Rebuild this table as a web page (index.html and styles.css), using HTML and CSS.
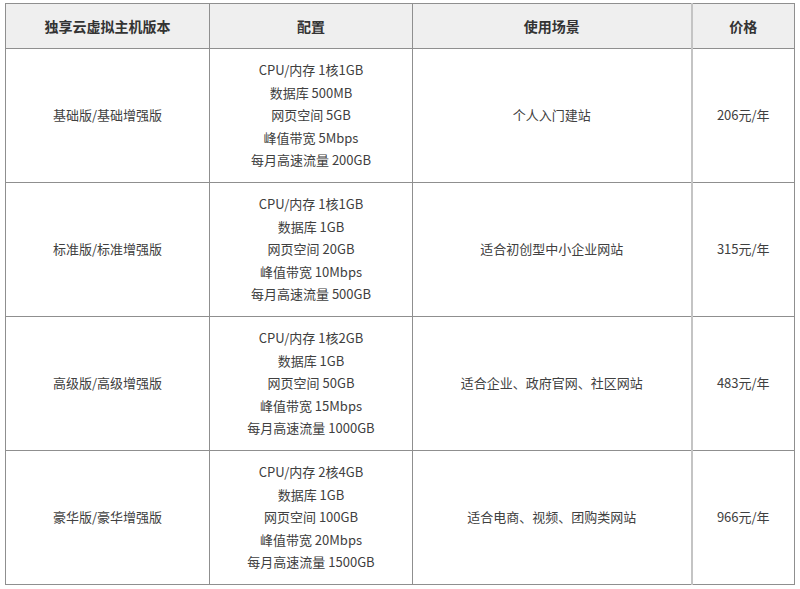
FILE: index.html
```html
<!DOCTYPE html>
<html lang="zh-CN">
<head>
<meta charset="utf-8">
<title>独享云虚拟主机版本</title>
<link rel="stylesheet" href="styles.css">
</head>
<body>
<table class="plans">
  <colgroup>
    <col class="c-name">
    <col class="c-spec">
    <col class="c-use">
    <col class="c-price">
  </colgroup>
  <thead>
    <tr class="head">
      <th>独享云虚拟主机版本</th>
      <th>配置</th>
      <th>使用场景</th>
      <th class="price">价格</th>
    </tr>
  </thead>
  <tbody>
    <tr class="row">
      <td>基础版/基础增强版</td>
      <td class="spec">CPU/内存 1核1GB<br>数据库 500MB<br>网页空间 5GB<br>峰值带宽 5Mbps<br>每月高速流量 200GB</td>
      <td>个人入门建站</td>
      <td class="price">206元/年</td>
    </tr>
    <tr class="row">
      <td>标准版/标准增强版</td>
      <td class="spec">CPU/内存 1核1GB<br>数据库 1GB<br>网页空间 20GB<br>峰值带宽 10Mbps<br>每月高速流量 500GB</td>
      <td>适合初创型中小企业网站</td>
      <td class="price">315元/年</td>
    </tr>
    <tr class="row">
      <td>高级版/高级增强版</td>
      <td class="spec">CPU/内存 1核2GB<br>数据库 1GB<br>网页空间 50GB<br>峰值带宽 15Mbps<br>每月高速流量 1000GB</td>
      <td>适合企业、政府官网、社区网站</td>
      <td class="price">483元/年</td>
    </tr>
    <tr class="row">
      <td>豪华版/豪华增强版</td>
      <td class="spec">CPU/内存 2核4GB<br>数据库 1GB<br>网页空间 100GB<br>峰值带宽 20Mbps<br>每月高速流量 1500GB</td>
      <td>适合电商、视频、团购类网站</td>
      <td class="price">966元/年</td>
    </tr>
  </tbody>
</table>
</body>
</html>
```

FILE: styles.css
```css
html, body {
  margin: 0;
  padding: 0;
  background: #ffffff;
}

body {
  padding: 3px 0 0 5px;
  font-family: "Noto Sans CJK SC", "Microsoft YaHei", "Noto Sans", sans-serif;
  color: #3a3a3a;
}

.plans {
  border-collapse: collapse;
  table-layout: fixed;
  width: 789px;
}

.c-name { width: 204px; }
.c-spec { width: 203px; }
.c-use { width: 279px; }
.c-price { width: 103px; }

.plans th,
.plans td {
  border: 1px solid #8f8f8f;
  text-align: center;
  vertical-align: middle;
  padding: 0 6px;
}

.plans th.price,
.plans td.price {
  border-left: 2px solid #c4c4c4;
}

.head th {
  height: 44px;
  background: #efefef;
  font-size: 14px;
  font-weight: 700;
  color: #333333;
  line-height: 20px;
}

.row td {
  height: 133px;
  font-size: 13px;
  line-height: 22.5px;
  color: #404040;
}

.row td.spec {
  line-height: 22.5px;
}
```
